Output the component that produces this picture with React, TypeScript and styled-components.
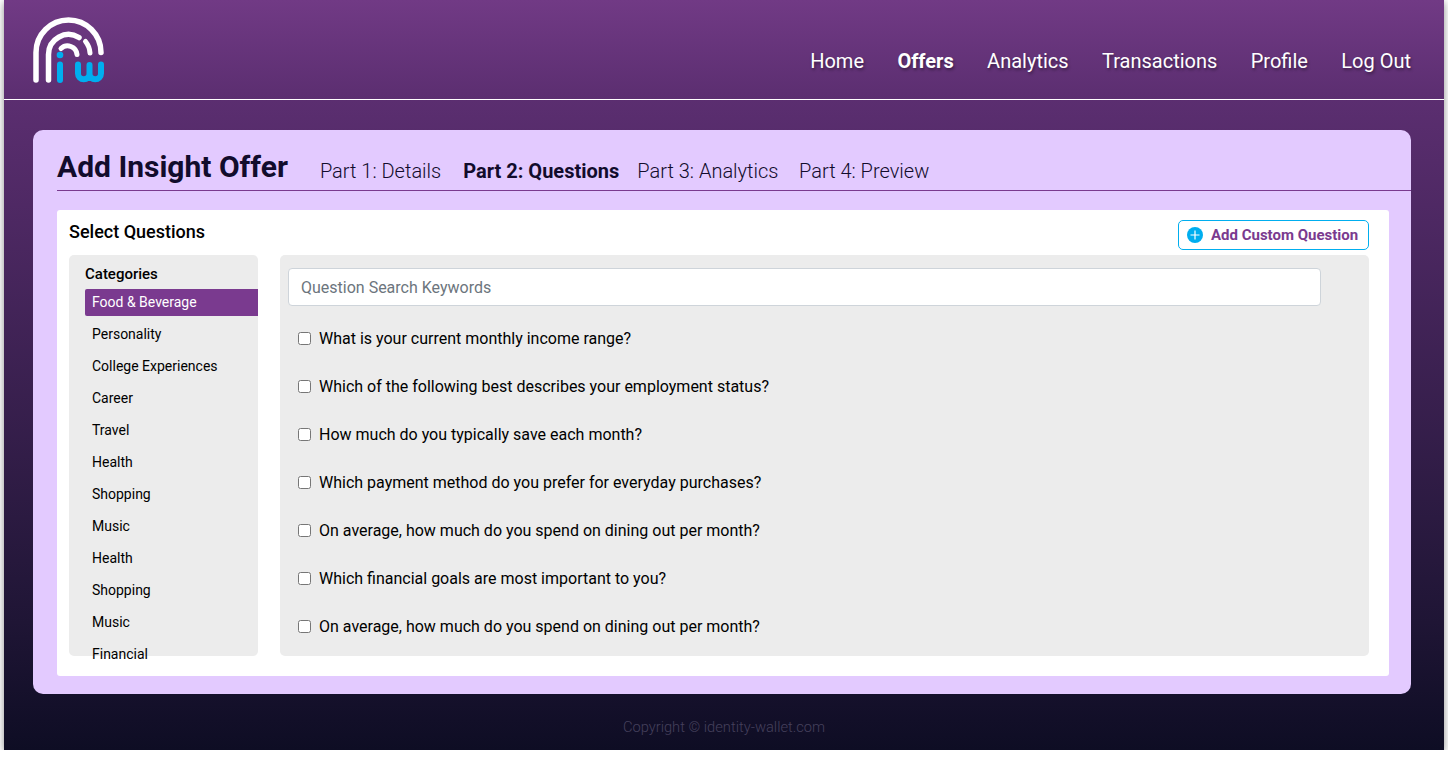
import styled, { createGlobalStyle } from "styled-components";

const GlobalStyle = createGlobalStyle`
  html, body {
    margin: 0;
    padding: 0;
    background: #ffffff;
  }
  body {
    font-family: Roboto, "Liberation Sans", sans-serif;
  }
`;

const Frame = styled.div`
  box-sizing: border-box;
  width: 1440px;
  height: 750px;
  margin-left: 4px;
  display: flex;
  flex-direction: column;
  background: linear-gradient(180deg, #713a85 0%, #5b2e70 13.3%, #1f1535 83%, #0e0d24 100%);
  box-shadow: 0 2px 8px rgba(0, 0, 0, 0.45);
`;

const Header = styled.header`
  box-sizing: border-box;
  height: 100px;
  flex-shrink: 0;
  display: flex;
  justify-content: space-between;
  align-items: flex-start;
  padding: 0 33px 0 25px;
  border-bottom: 1px solid #ffffff;
`;

const Nav = styled.nav`
  display: flex;
  gap: 33.4px;
  margin-top: 49px;
`;

const NavLink = styled.a<{ $active?: boolean }>`
  font-size: 20px;
  line-height: 24px;
  color: #ffffff;
  font-weight: ${(p) => (p.$active ? 700 : 400)};
  text-shadow: 1px 2px 3px rgba(0, 0, 0, 0.4);
`;

const Card = styled.main`
  box-sizing: border-box;
  width: 1378px;
  height: 564px;
  margin: 30px 0 0 29px;
  padding: 0 0 18px 24px;
  display: flex;
  flex-direction: column;
  border-radius: 10px;
  background: #e3caff;
`;

const TitleRow = styled.div`
  box-sizing: border-box;
  height: 61px;
  flex-shrink: 0;
  display: flex;
  align-items: flex-end;
  border-bottom: 1px solid #7a3a8f;
  padding-bottom: 6px;
`;

const Title = styled.h1`
  margin: 0 32px -3px 0;
  font-size: 30px;
  line-height: 40px;
  font-weight: 700;
  color: #120c2c;
`;

const Tab = styled.span<{ $active?: boolean; $gap: number }>`
  margin-right: ${(p) => p.$gap}px;
  font-size: 20px;
  line-height: 26px;
  font-weight: ${(p) => (p.$active ? 700 : 300)};
  color: #120c2c;
`;

const Panel = styled.section`
  box-sizing: border-box;
  flex: 1;
  min-height: 0;
  margin: 19px 22px 0 0;
  padding: 10px 20px 20px 12px;
  display: flex;
  flex-direction: column;
  background: #ffffff;
  border-radius: 3px;
`;

const PanelHead = styled.div`
  height: 30px;
  flex-shrink: 0;
  display: flex;
  justify-content: space-between;
  align-items: flex-start;
  margin-bottom: 5px;
`;

const PanelTitle = styled.h2`
  margin: 0;
  font-size: 18px;
  line-height: 24px;
  font-weight: 500;
  color: #000000;
`;

const AddButton = styled.button`
  box-sizing: border-box;
  width: 191px;
  height: 30px;
  display: flex;
  align-items: center;
  gap: 8px;
  padding: 0 0 0 8px;
  background: #ffffff;
  border: 1px solid #00aeef;
  border-radius: 5px;
  font-family: inherit;
  font-size: 15px;
  font-weight: 700;
  color: #7a3a8f;
`;

const Columns = styled.div`
  flex: 1;
  min-height: 0;
  display: flex;
  gap: 22px;
`;

const Sidebar = styled.aside`
  box-sizing: border-box;
  width: 189px;
  flex-shrink: 0;
  padding: 10px 0 0 16px;
  background: #ececec;
  border-radius: 5px;
`;

const SidebarTitle = styled.div`
  font-size: 15px;
  line-height: 18px;
  font-weight: 500;
  color: #000000;
  margin-bottom: 6px;
`;

const CategoryList = styled.ul`
  margin: 0;
  padding: 0;
  list-style: none;
  display: flex;
  flex-direction: column;
  gap: 5px;
`;

const Category = styled.li<{ $active?: boolean }>`
  box-sizing: border-box;
  height: 27px;
  display: flex;
  align-items: center;
  padding: 0 0 2px 7px;
  font-size: 14px;
  color: ${(p) => (p.$active ? "#ffffff" : "#000000")};
  background: ${(p) => (p.$active ? "#7a3a8f" : "transparent")};
  border-radius: 2px 0 0 2px;
`;

const Content = styled.div`
  box-sizing: border-box;
  flex: 1;
  padding: 13px 48px 0 8px;
  background: #ececec;
  border-radius: 5px;
`;

const SearchInput = styled.input`
  box-sizing: border-box;
  width: 100%;
  height: 38px;
  display: block;
  padding: 0 12px;
  margin-bottom: 8px;
  background: #ffffff;
  border: 1px solid #ced4da;
  border-radius: 4px;
  font-family: inherit;
  font-size: 16px;
  color: #000000;
  &::placeholder {
    color: #6c757d;
    opacity: 1;
  }
`;

const QuestionRow = styled.label`
  height: 48px;
  display: flex;
  align-items: center;
  gap: 8px;
  padding-left: 10px;
  font-size: 16px;
  color: #000000;
`;

const QuestionCheck = styled.input`
  width: 13px;
  height: 13px;
  margin: 0;
  flex-shrink: 0;
`;

const Footer = styled.footer`
  margin-top: 24px;
  text-align: center;
  font-size: 14.7px;
  line-height: 18px;
  font-weight: 300;
  color: #45405c;
`;

const links = ["Home", "Offers", "Analytics", "Transactions", "Profile", "Log Out"];

const tabs = [
  { label: "Part 1: Details", gap: 22 },
  { label: "Part 2: Questions", gap: 18, active: true },
  { label: "Part 3: Analytics", gap: 20.5 },
  { label: "Part 4: Preview", gap: 0 },
];

const categories = [
  "Food & Beverage",
  "Personality",
  "College Experiences",
  "Career",
  "Travel",
  "Health",
  "Shopping",
  "Music",
  "Health",
  "Shopping",
  "Music",
  "Financial",
];

const questions = [
  "What is your current monthly income range?",
  "Which of the following best describes your employment status?",
  "How much do you typically save each month?",
  "Which payment method do you prefer for everyday purchases?",
  "On average, how much do you spend on dining out per month?",
  "Which financial goals are most important to you?",
  "On average, how much do you spend on dining out per month?",
];

const Logo = () => (
  <svg width="80" height="90" viewBox="29 0 80 90" fill="none" strokeLinecap="round">
    <g stroke="#ffffff">
      <path strokeWidth="5.500" d="M36 80V52.500A32.500 32.500 0 0 1 101 52.500" />
      <path strokeWidth="5.500" d="M48.500 80V54.500A20 20 0 0 1 79 37.500" />
      <path strokeWidth="5" d="M85.500 41.500A20 20 0 0 1 90 53" />
      <path strokeWidth="5" d="M61 48.500A9.500 9.500 0 0 1 77 54.500" />
    </g>
    <g stroke="#00aeef" strokeWidth="6">
      <path d="M60 64.500V80" />
      <path d="M78 64.500V73.500A5.700 5.700 0 0 0 89.500 73.500V65M89.500 73.500A5.700 5.700 0 0 0 101 73.500V64.500" />
    </g>
    <circle cx="60" cy="55" r="3.300" fill="#00aeef" />
  </svg>
);

const PlusIcon = () => (
  <svg width="16" height="16" viewBox="0 0 16 16">
    <circle cx="8" cy="8" r="8" fill="#00aeef" />
    <path d="M8 3.500V12.500M3.500 8H12.500" stroke="#ffffff" strokeWidth="1.200" />
  </svg>
);

const App = () => {
  return (
    <>
      <GlobalStyle />
      <Frame>
        <Header>
          <Logo />
          <Nav>
            {links.map((link) => (
              <NavLink key={link} $active={link === "Offers"}>
                {link}
              </NavLink>
            ))}
          </Nav>
        </Header>
        <Card>
          <TitleRow>
            <Title>Add Insight Offer</Title>
            {tabs.map((tab) => (
              <Tab key={tab.label} $active={tab.active} $gap={tab.gap}>
                {tab.label}
              </Tab>
            ))}
          </TitleRow>
          <Panel>
            <PanelHead>
              <PanelTitle>Select Questions</PanelTitle>
              <AddButton>
                <PlusIcon />
                Add Custom Question
              </AddButton>
            </PanelHead>
            <Columns>
              <Sidebar>
                <SidebarTitle>Categories</SidebarTitle>
                <CategoryList>
                  {categories.map((name, i) => (
                    <Category key={i} $active={i === 0}>
                      {name}
                    </Category>
                  ))}
                </CategoryList>
              </Sidebar>
              <Content>
                <SearchInput placeholder="Question Search Keywords" />
                {questions.map((q, i) => (
                  <QuestionRow key={i}>
                    <QuestionCheck type="checkbox" />
                    {q}
                  </QuestionRow>
                ))}
              </Content>
            </Columns>
          </Panel>
        </Card>
        <Footer>Copyright © identity-wallet.com</Footer>
      </Frame>
    </>
  );
};

export default App;
